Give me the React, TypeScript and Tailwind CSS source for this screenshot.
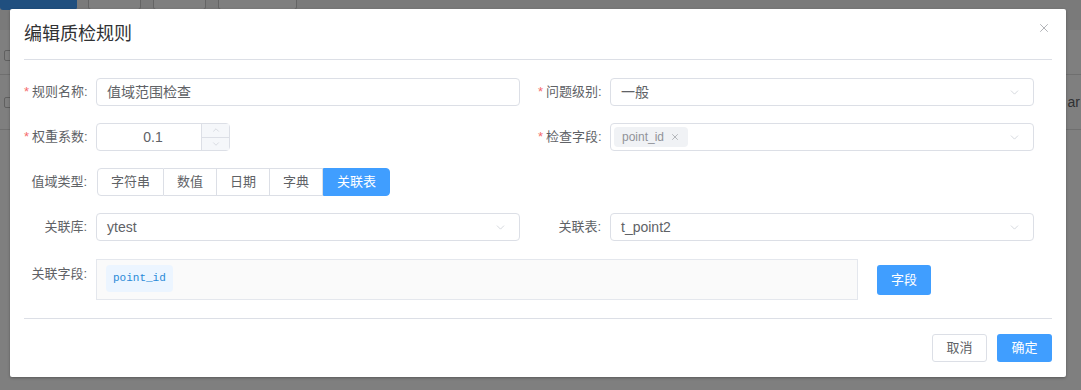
import { ChevronDown, ChevronUp, X } from "lucide-react";

const font = "font-['Liberation_Sans','Noto_Sans_CJK_SC',sans-serif]";

function Label({ text, required, top }: { text: string; required?: boolean; top?: boolean }) {
  return (
    <div
      className={`w-[72px] shrink-0 whitespace-nowrap pr-[9px] text-right text-[13px] text-[#606266] ${top ? "pt-[5px]" : "leading-[28px]"}`}
    >
      {required && <span className="mr-[3px] text-[#f56c6c]">*</span>}
      {text}
    </div>
  );
}

function Select({ value }: { value: string }) {
  return (
    <div className="flex h-[28px] flex-1 items-center justify-between rounded-[4px] border border-[#dcdfe6] pl-[10px] pr-[12px] text-[14px] text-[#606266]">
      <span>{value}</span>
      <ChevronDown size={13} strokeWidth={1.2} className="text-[#c0c4cc]" />
    </div>
  );
}

export default function App() {
  const types = ["字符串", "数值", "日期", "字典", "关联表"];

  return (
    <div className={`relative h-[390px] w-[1081px] overflow-hidden bg-[#f5f5f5] ${font}`}>
      {/* page behind the dialog */}
      <div className="flex flex-col">
        <div className="-mt-[20px] flex items-start gap-[11px]">
          <div className="h-[30px] w-[77px] rounded-[3px] bg-[#409eff]" />
          <div className="h-[30px] w-[53px] rounded-[3px] border border-[#c8c8c8] bg-white" />
          <div className="ml-[1px] h-[30px] w-[53px] rounded-[3px] border border-[#c8c8c8] bg-white" />
          <div className="ml-[1px] h-[30px] w-[79px] rounded-[3px] border border-[#c8c8c8] bg-white" />
        </div>
        <div className="mt-[20px] h-[45px] border-b border-[#dedede] bg-white">
          <div className="ml-[4px] mt-[20px] h-[11px] w-[11px] rounded-[2px] border border-[#c0c0c0]" />
        </div>
        <div className="flex h-[55px] items-center justify-between border-b border-[#dedede] bg-white">
          <div className="ml-[4px] h-[11px] w-[11px] rounded-[2px] border border-[#c0c0c0]" />
          <span className="mr-[1px] text-[14px] text-[#606266]">ar</span>
        </div>
        <div className="h-[260px] bg-white" />
      </div>
      <div className="absolute inset-0 bg-black/50" />

      {/* dialog */}
      <div className="absolute left-[10px] top-[9px] flex h-[368px] w-[1056px] flex-col rounded-[2px] bg-white shadow-[0_1px_3px_rgba(0,0,0,0.3)]">
        <div className="relative flex h-[50px] shrink-0 items-center px-[14px] pt-[1px] text-[18px] text-[#303133]">
          编辑质检规则
          <X size={14} strokeWidth={1.2} className="absolute right-[15px] top-[12px] text-[#909399]" />
        </div>
        <div className="mx-[14px] shrink-0 border-t border-[#dcdfe6]" />

        <div className="flex shrink-0 flex-col gap-[17px] pl-[14px] pr-[32px] pt-[18px]">
          <div className="grid grid-cols-2 gap-x-[18px] gap-y-[17px]">
            <div className="flex">
              <Label text="规则名称:" required />
              <div className="flex h-[28px] flex-1 items-center rounded-[4px] border border-[#dcdfe6] px-[10px] text-[14px] text-[#606266]">
                值域范围检查
              </div>
            </div>
            <div className="flex">
              <Label text="问题级别:" required />
              <Select value="一般" />
            </div>

            <div className="flex">
              <Label text="权重系数:" required />
              <div className="flex h-[28px] w-[134px] rounded-[4px] border border-[#dcdfe6]">
                <div className="flex flex-1 items-center justify-center pl-[8px] text-[14px] text-[#606266]">0.1</div>
                <div className="flex w-[28px] flex-col border-l border-[#dcdfe6] bg-[#f5f7fa] text-[#c0c4cc]">
                  <div className="flex flex-1 items-center justify-center border-b border-[#dcdfe6]">
                    <ChevronUp size={10} strokeWidth={1.3} />
                  </div>
                  <div className="flex flex-1 items-center justify-center">
                    <ChevronDown size={10} strokeWidth={1.3} />
                  </div>
                </div>
              </div>
            </div>
            <div className="flex">
              <Label text="检查字段:" required />
              <div className="flex h-[28px] flex-1 items-center justify-between rounded-[4px] border border-[#dcdfe6] pl-[3px] pr-[12px]">
                <span className="flex h-[20px] items-center gap-[6px] rounded-[4px] bg-[#f0f2f5] px-[8px] text-[12px] text-[#909399]">
                  point_id
                  <X size={10} strokeWidth={1.5} />
                </span>
                <ChevronDown size={13} strokeWidth={1.2} className="text-[#c0c4cc]" />
              </div>
            </div>

            <div className="col-span-2 flex">
              <Label text="值域类型:" />
              <div className="flex h-[28px] pl-[1px]">
                {types.map((t, i) => {
                  const active = i === types.length - 1;
                  return (
                    <div
                      key={t}
                      className={`flex items-center px-[13px] text-[13px] ${
                        active
                          ? "rounded-r-[4px] border border-[#409eff] bg-[#409eff] text-white"
                          : `border-y border-r border-[#dcdfe6] text-[#606266] ${i === 0 ? "rounded-l-[4px] border-l" : ""}`
                      }`}
                    >
                      {t}
                    </div>
                  );
                })}
              </div>
            </div>

            <div className="flex">
              <Label text="关联库:" />
              <Select value="ytest" />
            </div>
            <div className="flex">
              <Label text="关联表:" />
              <Select value="t_point2" />
            </div>
          </div>

          <div className="mt-[1px] flex items-start">
            <Label text="关联字段:" top />
            <div className="flex h-[41px] w-[762px] items-start border border-[#e4e7ed] bg-[#fafafa] pl-[9px] pt-[5px]">
              <span className="flex h-[27px] items-center rounded-[4px] bg-[#ecf5ff] px-[7px] font-['Liberation_Mono',monospace] text-[11px] text-[#2a8ad8]">
                point_id
              </span>
            </div>
            <button className="ml-[19px] mt-[6px] h-[30px] w-[54px] rounded-[3px] bg-[#409eff] text-[13px] text-white">
              字段
            </button>
          </div>
        </div>

        <div className="mx-[14px] mt-[18px] shrink-0 border-t border-[#dcdfe6]" />
        <div className="flex shrink-0 justify-end gap-[10px] px-[14px] pt-[15px]">
          <button className="h-[28px] w-[55px] rounded-[3px] border border-[#dcdfe6] text-[13px] text-[#606266]">取消</button>
          <button className="h-[28px] w-[55px] rounded-[3px] bg-[#409eff] text-[13px] text-white">确定</button>
        </div>
      </div>
    </div>
  );
}
